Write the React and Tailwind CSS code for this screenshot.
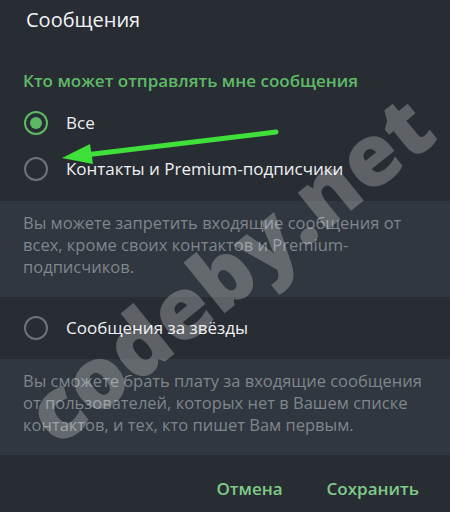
import React from "react";

function Radio({ checked }) {
  return checked ? (
    <div className="w-[24px] h-[24px] rounded-full border-2 border-[#5cb865] flex items-center justify-center shrink-0">
      <div className="w-[12px] h-[12px] rounded-full bg-[#5cb865]" />
    </div>
  ) : (
    <div className="w-[24px] h-[24px] rounded-full border-2 border-[#6c737b] shrink-0" />
  );
}

function Option({ checked, label }) {
  return (
    <div className="flex items-center h-[46px] pl-[24px]">
      <Radio checked={checked} />
      <span className="ml-[18px] text-[17px] text-[#eef0f2]">{label}</span>
    </div>
  );
}

export default function App() {
  return (
    <div
      className="relative w-[450px] h-[512px] overflow-hidden bg-[#282d33] flex flex-col"
      style={{ fontFamily: '"Open Sans", "Noto Sans", sans-serif' }}
    >
      <div className="h-[40px] pl-[26px] flex items-center text-[20px] text-[#f3f4f5]">Сообщения</div>
      <div className="pt-[28px] pl-[23px] text-[17px] font-semibold text-[#5fba68] leading-[26px]">
        Кто может отправлять мне сообщения
      </div>
      <div className="pt-[6px]">
        <Option checked label="Все" />
        <Option label="Контакты и Premium-подписчики" />
      </div>
      <div className="mt-[9px] h-[96px] bg-[#31373e] px-[23px] pt-[11px] text-[16.5px] leading-[22px] text-[#7f868d]">
        Вы можете запретить входящие сообщения от всех, кроме своих контактов и Premium-подписчиков.
      </div>
      <div className="pt-[8px] pb-[8px]">
        <Option label="Сообщения за звёзды" />
      </div>
      <div className="h-[96px] bg-[#31373e] px-[23px] pt-[11px] text-[16.5px] leading-[22px] text-[#7f868d]">
        Вы сможете брать плату за входящие сообщения от пользователей, которых нет в Вашем списке контактов, и тех, кто пишет Вам первым.
      </div>
      <div className="flex-1 flex items-center justify-end pr-[31px] gap-[44px] text-[17px] font-semibold text-[#7fcb8a] pt-[10px]">
        <span>Отмена</span>
        <span>Сохранить</span>
      </div>

      {/* arrow annotation */}
      <svg className="absolute left-0 top-0 pointer-events-none" width="450" height="512">
        <line x1="276" y1="132" x2="85" y2="155" stroke="#3fe03a" strokeWidth="5" strokeLinecap="round" />
        <polygon points="62,158 90,144 93,164" fill="#3fe03a" />
      </svg>

      {/* watermark */}
      <div
        className="absolute left-[228px] top-[268px] pointer-events-none font-extrabold text-[86px] leading-none text-white/25 whitespace-nowrap"
        style={{ transform: "translate(-50%, -50%) rotate(-39deg)" }}
      >
        codeby.net
      </div>
    </div>
  );
}
